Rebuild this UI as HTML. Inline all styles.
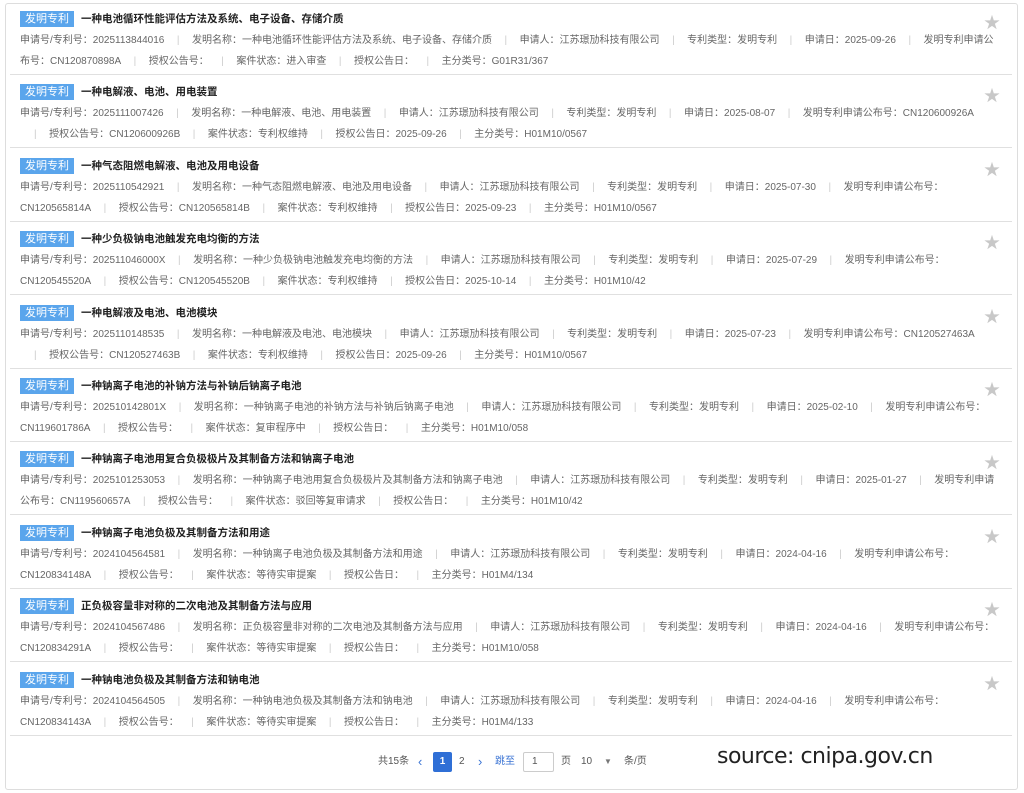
<!DOCTYPE html>
<html><head><meta charset="utf-8"><style>
*{margin:0;padding:0;box-sizing:border-box}
body{width:1024px;height:793px;background:#fff;font-family:"Liberation Sans","Noto Sans CJK SC",sans-serif;position:relative;overflow:hidden}
.box{position:absolute;left:5px;top:3px;width:1013px;height:787px;border:1px solid #ddd;border-radius:3px}
.it{position:absolute;left:10px;width:1002px;height:73px;border-bottom:1px solid #e0e0e0}
.t{position:absolute;left:10px;top:9px;height:16px;white-space:nowrap;font-size:10.5px;font-weight:bold;color:#222;line-height:16px}
.tag{display:inline-block;background:#5aa5ec;color:#fff;font-weight:normal;padding:0 5px;margin-right:7px;font-size:11px;height:16px;line-height:16px}
.r{position:absolute;left:10px;white-space:nowrap;font-size:10px;color:#666;line-height:14px}
.r1{top:32px}.r2{top:53px}
.s{color:#ccc;margin:0 12.5px}
.star{position:absolute;right:12px;top:7px;color:#c8c8c8;font-size:16px}
.pg{position:absolute;top:754px;font-size:10px;color:#555;line-height:16px}
</style></head><body>
<div class="box"></div>

<div class="it" style="top:2px"><div class="t"><span class="tag">发明专利</span>一种电池循环性能评估方法及系统、电子设备、存储介质</div><div class="star">★</div>
<div class="r r1">申请号/专利号：2025113844016<span class="s">|</span>发明名称：一种电池循环性能评估方法及系统、电子设备、存储介质<span class="s">|</span>申请人：江苏璟劢科技有限公司<span class="s">|</span>专利类型：发明专利<span class="s">|</span>申请日：2025-09-26<span class="s">|</span>发明专利申请公</div>
<div class="r r2">布号：CN120870898A<span class="s">|</span>授权公告号：<span class="s">|</span>案件状态：进入审查<span class="s">|</span>授权公告日：<span class="s">|</span>主分类号：G01R31/367</div></div>

<div class="it" style="top:75.4px"><div class="t"><span class="tag">发明专利</span>一种电解液、电池、用电装置</div><div class="star">★</div>
<div class="r r1">申请号/专利号：2025111007426<span class="s">|</span>发明名称：一种电解液、电池、用电装置<span class="s">|</span>申请人：江苏璟劢科技有限公司<span class="s">|</span>专利类型：发明专利<span class="s">|</span>申请日：2025-08-07<span class="s">|</span>发明专利申请公布号：CN120600926A</div>
<div class="r r2"><span class="s" style="margin-left:14px">|</span>授权公告号：CN120600926B<span class="s">|</span>案件状态：专利权维持<span class="s">|</span>授权公告日：2025-09-26<span class="s">|</span>主分类号：H01M10/0567</div></div>

<div class="it" style="top:148.8px"><div class="t"><span class="tag">发明专利</span>一种气态阻燃电解液、电池及用电设备</div><div class="star">★</div>
<div class="r r1">申请号/专利号：2025110542921<span class="s">|</span>发明名称：一种气态阻燃电解液、电池及用电设备<span class="s">|</span>申请人：江苏璟劢科技有限公司<span class="s">|</span>专利类型：发明专利<span class="s">|</span>申请日：2025-07-30<span class="s">|</span>发明专利申请公布号：</div>
<div class="r r2">CN120565814A<span class="s">|</span>授权公告号：CN120565814B<span class="s">|</span>案件状态：专利权维持<span class="s">|</span>授权公告日：2025-09-23<span class="s">|</span>主分类号：H01M10/0567</div></div>

<div class="it" style="top:222.2px"><div class="t"><span class="tag">发明专利</span>一种少负极钠电池触发充电均衡的方法</div><div class="star">★</div>
<div class="r r1">申请号/专利号：202511046000X<span class="s">|</span>发明名称：一种少负极钠电池触发充电均衡的方法<span class="s">|</span>申请人：江苏璟劢科技有限公司<span class="s">|</span>专利类型：发明专利<span class="s">|</span>申请日：2025-07-29<span class="s">|</span>发明专利申请公布号：</div>
<div class="r r2">CN120545520A<span class="s">|</span>授权公告号：CN120545520B<span class="s">|</span>案件状态：专利权维持<span class="s">|</span>授权公告日：2025-10-14<span class="s">|</span>主分类号：H01M10/42</div></div>

<div class="it" style="top:295.6px"><div class="t"><span class="tag">发明专利</span>一种电解液及电池、电池模块</div><div class="star">★</div>
<div class="r r1">申请号/专利号：2025110148535<span class="s">|</span>发明名称：一种电解液及电池、电池模块<span class="s">|</span>申请人：江苏璟劢科技有限公司<span class="s">|</span>专利类型：发明专利<span class="s">|</span>申请日：2025-07-23<span class="s">|</span>发明专利申请公布号：CN120527463A</div>
<div class="r r2"><span class="s" style="margin-left:14px">|</span>授权公告号：CN120527463B<span class="s">|</span>案件状态：专利权维持<span class="s">|</span>授权公告日：2025-09-26<span class="s">|</span>主分类号：H01M10/0567</div></div>

<div class="it" style="top:369px"><div class="t"><span class="tag">发明专利</span>一种钠离子电池的补钠方法与补钠后钠离子电池</div><div class="star">★</div>
<div class="r r1">申请号/专利号：202510142801X<span class="s">|</span>发明名称：一种钠离子电池的补钠方法与补钠后钠离子电池<span class="s">|</span>申请人：江苏璟劢科技有限公司<span class="s">|</span>专利类型：发明专利<span class="s">|</span>申请日：2025-02-10<span class="s">|</span>发明专利申请公布号：</div>
<div class="r r2">CN119601786A<span class="s">|</span>授权公告号：<span class="s">|</span>案件状态：复审程序中<span class="s">|</span>授权公告日：<span class="s">|</span>主分类号：H01M10/058</div></div>

<div class="it" style="top:442.4px"><div class="t"><span class="tag">发明专利</span>一种钠离子电池用复合负极极片及其制备方法和钠离子电池</div><div class="star">★</div>
<div class="r r1">申请号/专利号：2025101253053<span class="s">|</span>发明名称：一种钠离子电池用复合负极极片及其制备方法和钠离子电池<span class="s">|</span>申请人：江苏璟劢科技有限公司<span class="s">|</span>专利类型：发明专利<span class="s">|</span>申请日：2025-01-27<span class="s">|</span>发明专利申请</div>
<div class="r r2">公布号：CN119560657A<span class="s">|</span>授权公告号：<span class="s">|</span>案件状态：驳回等复审请求<span class="s">|</span>授权公告日：<span class="s">|</span>主分类号：H01M10/42</div></div>

<div class="it" style="top:515.8px"><div class="t"><span class="tag">发明专利</span>一种钠离子电池负极及其制备方法和用途</div><div class="star">★</div>
<div class="r r1">申请号/专利号：2024104564581<span class="s">|</span>发明名称：一种钠离子电池负极及其制备方法和用途<span class="s">|</span>申请人：江苏璟劢科技有限公司<span class="s">|</span>专利类型：发明专利<span class="s">|</span>申请日：2024-04-16<span class="s">|</span>发明专利申请公布号：</div>
<div class="r r2">CN120834148A<span class="s">|</span>授权公告号：<span class="s">|</span>案件状态：等待实审提案<span class="s">|</span>授权公告日：<span class="s">|</span>主分类号：H01M4/134</div></div>

<div class="it" style="top:589.2px"><div class="t"><span class="tag">发明专利</span>正负极容量非对称的二次电池及其制备方法与应用</div><div class="star">★</div>
<div class="r r1">申请号/专利号：2024104567486<span class="s">|</span>发明名称：正负极容量非对称的二次电池及其制备方法与应用<span class="s">|</span>申请人：江苏璟劢科技有限公司<span class="s">|</span>专利类型：发明专利<span class="s">|</span>申请日：2024-04-16<span class="s">|</span>发明专利申请公布号：</div>
<div class="r r2">CN120834291A<span class="s">|</span>授权公告号：<span class="s">|</span>案件状态：等待实审提案<span class="s">|</span>授权公告日：<span class="s">|</span>主分类号：H01M10/058</div></div>

<div class="it" style="top:662.6px"><div class="t"><span class="tag">发明专利</span>一种钠电池负极及其制备方法和钠电池</div><div class="star">★</div>
<div class="r r1">申请号/专利号：2024104564505<span class="s">|</span>发明名称：一种钠电池负极及其制备方法和钠电池<span class="s">|</span>申请人：江苏璟劢科技有限公司<span class="s">|</span>专利类型：发明专利<span class="s">|</span>申请日：2024-04-16<span class="s">|</span>发明专利申请公布号：</div>
<div class="r r2">CN120834143A<span class="s">|</span>授权公告号：<span class="s">|</span>案件状态：等待实审提案<span class="s">|</span>授权公告日：<span class="s">|</span>主分类号：H01M4/133</div></div>

<div class="pg" style="left:378px">共15条</div>
<div class="pg" style="left:418px;color:#3b74d4;font-size:13px">‹</div>
<div class="pg" style="left:433px;top:752px;width:19px;height:20px;background:#2f6fd6;color:#fff;border-radius:2px;text-align:center;line-height:20px;font-weight:bold">1</div>
<div class="pg" style="left:459px">2</div>
<div class="pg" style="left:478px;color:#3b74d4;font-size:13px">›</div>
<div class="pg" style="left:495px;color:#3b74d4">跳至</div>
<div class="pg" style="left:523px;top:752px;width:31px;height:20px;border:1px solid #ccc;border-radius:2px;padding-left:8px;line-height:18px">1</div>
<div class="pg" style="left:561px">页</div>
<div class="pg" style="left:581px">10</div>
<div class="pg" style="left:604px;font-size:8px;color:#777">▼</div>
<div class="pg" style="left:624px">条/页</div>
<div style="position:absolute;left:717px;top:744px;font-size:22px;color:#222;font-family:'DejaVu Sans',sans-serif;letter-spacing:-0.5px">source: cnipa.gov.cn</div>
</body></html>
